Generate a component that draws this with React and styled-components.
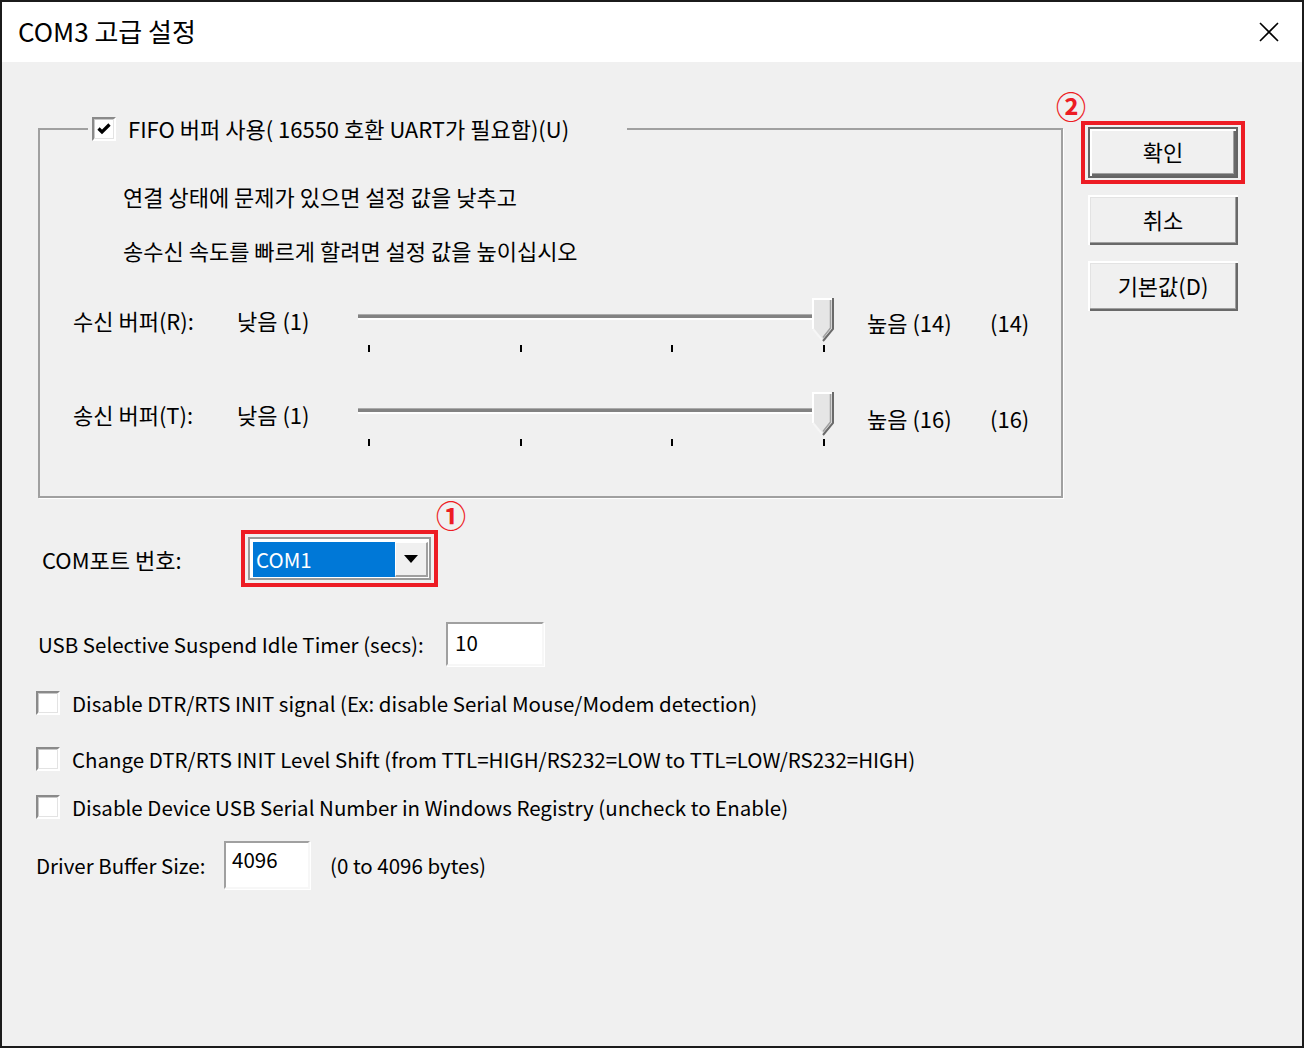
import React from 'react';
import styled, { createGlobalStyle } from 'styled-components';

const FONT = `"Noto Sans CJK KR", "Noto Sans", sans-serif`;
const RED = '#ed1c24';

const Global = createGlobalStyle`
  html, body { margin: 0; padding: 0; background: #f0f0f0; }
  body { font-family: ${FONT}; color: #000; }
  * { box-sizing: border-box; }
`;

const Window = styled.div`
  width: 1304px;
  height: 1048px;
  border: 2px solid #1b1b1b;
  display: flex;
  flex-direction: column;
  background: #f0f0f0;
  overflow: hidden;
`;

const TitleBar = styled.div`
  height: 60px;
  flex-shrink: 0;
  background: #fff;
  display: flex;
  align-items: center;
  justify-content: space-between;
  padding: 0 22px 4px 16px;
  font-size: 26px;
`;

const CloseWrap = styled.span`
  display: flex;
  margin-top: 4px;
`;

const Body = styled.div`
  flex: 1;
  display: flex;
  align-items: flex-start;
  font-size: 20.5px;
`;

const Main = styled.div`
  width: 1061px;
  padding: 54px 0 0 34px;
  display: flex;
  flex-direction: column;
`;

const Side = styled.div`
  padding: 59px 0 0 18px;
  display: flex;
  flex-direction: column;
  align-items: flex-start;
  font-size: 22px;
`;

const Group = styled.fieldset`
  margin: 0 0 0 2px;
  padding: 0 0 46px 0;
  min-width: 0;
  border: 2px solid #a0a0a0;
  box-shadow: 1px 1px 0 #fff;
  font-size: 22px;
`;

const Legend = styled.legend`
  margin-left: 48px;
  padding: 0 58px 0 4px;
  height: 26px;
  line-height: 26px;
  display: flex;
  align-items: center;
  gap: 12px;
`;

const LegendText = styled.span`
  margin-top: -2px;
`;

const GroupBody = styled.div`
  padding-top: 41px;
`;

const Desc = styled.div`
  padding-left: 83px;
  line-height: 26px;
  margin-top: ${p => p.$mt || 0}px;
`;

const SliderRow = styled.div`
  display: grid;
  grid-template-columns: 164px 121px 509px 123px auto;
  padding-left: 33px;
  height: 60px;
  margin-top: ${p => p.$mt}px;
`;

const Cell = styled.div`
  line-height: 26px;
  margin-top: ${p => p.$mt}px;
  white-space: nowrap;
`;

const SliderBox = styled.div`
  display: flex;
  flex-direction: column;
`;

const TrackLine = styled.div`
  display: flex;
  align-items: flex-start;
  padding-top: 2px;
`;

const Track = styled.div`
  width: 454px;
  height: 6px;
  margin-top: 16px;
  border-top: 1px solid #ababab;
  border-bottom: 2px solid #fff;
  background: #828282;
`;

const Ticks = styled.div`
  width: 457px;
  margin: 3px 0 0 10px;
  display: flex;
  justify-content: space-between;
`;

const Tick = styled.span`
  width: 2px;
  height: 7px;
  background: #000;
`;

const Row = styled.div`
  display: flex;
  align-items: center;
  margin-top: ${p => p.$mt}px;
  margin-left: ${p => p.$ml || 0}px;
`;

const Label = styled.div`
  width: ${p => p.$w}px;
  margin-left: ${p => p.$ml || 0}px;
  font-size: ${p => p.$fs || 'inherit'};
  line-height: 26px;
  white-space: nowrap;
  flex-shrink: 0;
`;

const AnnotFrame = styled.div`
  position: relative;
  border: 4px solid ${RED};
  padding: ${p => p.$pad};
`;

const Marker = styled.span`
  position: absolute;
  left: ${p => p.$l}px;
  top: ${p => p.$t}px;
  color: ${RED};
  font-size: 30px;
  font-weight: 700;
  line-height: 30px;
`;

const Combo = styled.div`
  width: 183px;
  height: 43px;
  border: 2px solid #9a9a9a;
  background: #fff;
  padding: 3px 1px 1px 3px;
  display: flex;
`;

const ComboValue = styled.div`
  flex: 1;
  background: #0078d7;
  color: #fff;
  line-height: 34px;
  padding-left: 3px;
`;

const ComboButton = styled.div`
  width: 33px;
  background: #f0f0f0;
  border-style: solid;
  border-width: 1px 2px 2px 1px;
  border-color: #fff #a0a0a0 #a0a0a0 #fff;
  display: flex;
  align-items: center;
  justify-content: center;
`;

const TextBox = styled.div`
  width: ${p => p.$w}px;
  height: ${p => p.$h}px;
  background: #fff;
  border-style: solid;
  border-width: 2px;
  border-color: #a0a0a0 #f7f7f7 #f7f7f7 #a0a0a0;
  box-shadow: 1px 1px 0 #fff;
  padding: ${p => p.$pt}px 0 0 ${p => p.$pl}px;
  line-height: 26px;
`;

const BoxWrap = styled.span`
  width: 24px;
  height: 24px;
  flex-shrink: 0;
  background: #fff;
  border-style: solid;
  border-width: 2px;
  border-color: #8a8a8a #fff #fff #8a8a8a;
  box-shadow: inset -1px -1px 0 #e3e3e3, inset 1px 1px 0 #c8c8c8;
  display: flex;
  align-items: center;
  justify-content: center;
`;

const CheckRow = styled.div`
  display: flex;
  align-items: center;
  gap: 12px;
  height: 24px;
  margin-top: ${p => p.$mt}px;
  white-space: nowrap;
`;

const Button = styled.div`
  width: 150px;
  height: ${p => p.$h}px;
  margin: ${p => p.$m};
  padding-bottom: 3px;
  background: #f0f0f0;
  display: flex;
  align-items: center;
  justify-content: center;
  box-shadow: ${p => (p.$default
    ? 'inset 0 0 0 2px #646464, inset 4px 4px 0 #fff, inset -4px -4px 0 #696969, inset -5px -5px 0 #a0a0a0'
    : 'inset 2px 2px 0 #fff, inset -2px -2px 0 #696969, inset -3px -3px 0 #a0a0a0, inset 3px 3px 0 #e3e3e3')};
`;

function CheckBox({ checked }) {
  return (
    <BoxWrap>
      {checked && (
        <svg width="14" height="12" viewBox="0 0 14 12">
          <path d="M1.5 5.5 L5 9 L12.5 1.5" fill="none" stroke="#000" strokeWidth="3.2" />
        </svg>
      )}
    </BoxWrap>
  );
}

function Thumb() {
  return (
    <svg width="22" height="44" viewBox="0 0 22 44" style={{ display: 'block' }}>
      <polygon points="0,0 22,0 22,31 11,44 0,31" fill="#e6e6e6" />
      <polyline points="1,31 1,1 21,1" fill="none" stroke="#fff" strokeWidth="2" />
      <polyline points="1,31 11,43" fill="none" stroke="#f6f6f6" strokeWidth="2" />
      <polyline points="21,0 21,31 11,43" fill="none" stroke="#6a6a6a" strokeWidth="2" />
      <polyline points="18.5,2 18.5,30 11,39.5" fill="none" stroke="#a0a0a0" strokeWidth="1.5" />
    </svg>
  );
}

function Slider() {
  return (
    <SliderBox>
      <TrackLine>
        <Track />
        <Thumb />
      </TrackLine>
      <Ticks>
        <Tick /><Tick /><Tick /><Tick />
      </Ticks>
    </SliderBox>
  );
}

function CloseIcon() {
  return (
    <CloseWrap>
      <svg width="22" height="22" viewBox="0 0 22 22">
        <path d="M2 2 L20 20 M20 2 L2 20" stroke="#000" strokeWidth="1.6" />
      </svg>
    </CloseWrap>
  );
}

export default function App() {
  return (
    <>
      <Global />
      <Window>
        <TitleBar>
          <span>COM3 고급 설정</span>
          <CloseIcon />
        </TitleBar>
        <Body>
          <Main>
            <Group>
              <Legend>
                <CheckBox checked />
                <LegendText>FIFO 버퍼 사용( 16550 호환 UART가 필요함)(U)</LegendText>
              </Legend>
              <GroupBody>
                <Desc>연결 상태에 문제가 있으면 설정 값을 낮추고</Desc>
                <Desc $mt={28}>송수신 속도를 빠르게 할려면 설정 값을 높이십시오</Desc>
                <SliderRow $mt={33}>
                  <Cell $mt={11}>수신 버퍼(R):</Cell>
                  <Cell $mt={11}>낮음 (1)</Cell>
                  <Slider />
                  <Cell $mt={13}>높음 (14)</Cell>
                  <Cell $mt={13}>(14)</Cell>
                </SliderRow>
                <SliderRow $mt={34}>
                  <Cell $mt={11}>송신 버퍼(T):</Cell>
                  <Cell $mt={11}>낮음 (1)</Cell>
                  <Slider />
                  <Cell $mt={15}>높음 (16)</Cell>
                  <Cell $mt={15}>(16)</Cell>
                </SliderRow>
              </GroupBody>
            </Group>

            <Row $mt={32} $ml={6}>
              <Label $w={199} $fs="22px">COM포트 번호:</Label>
              <AnnotFrame $pad="3px">
                <Marker $l={191} $t={-35}>①</Marker>
                <Combo>
                  <ComboValue>COM1</ComboValue>
                  <ComboButton>
                    <svg width="14" height="8" viewBox="0 0 14 8">
                      <polygon points="0,0 14,0 7,8" fill="#000" />
                    </svg>
                  </ComboButton>
                </Combo>
              </AnnotFrame>
            </Row>

            <Row $mt={35} $ml={2}>
              <Label $w={408}>USB Selective Suspend Idle Timer (secs):</Label>
              <TextBox $w={98} $h={44} $pt={5} $pl={7}>10</TextBox>
            </Row>

            <CheckRow $mt={25}>
              <CheckBox />
              <span>Disable DTR/RTS INIT signal (Ex: disable Serial Mouse/Modem detection)</span>
            </CheckRow>
            <CheckRow $mt={32}>
              <CheckBox />
              <span>Change DTR/RTS INIT Level Shift (from TTL=HIGH/RS232=LOW to TTL=LOW/RS232=HIGH)</span>
            </CheckRow>
            <CheckRow $mt={24}>
              <CheckBox />
              <span>Disable Device USB Serial Number in Windows Registry (uncheck to Enable)</span>
            </CheckRow>

            <Row $mt={22}>
              <Label $w={188}>Driver Buffer Size:</Label>
              <TextBox $w={86} $h={48} $pt={3} $pl={6}>4096</TextBox>
              <Label $w={200} $ml={20}>(0 to 4096 bytes)</Label>
            </Row>
          </Main>

          <Side>
            <AnnotFrame $pad="2px 3px">
              <Marker $l={-29} $t={-35}>②</Marker>
              <Button $default $h={51} $m="0">확인</Button>
            </AnnotFrame>
            <Button $h={50} $m="11px 0 0 7px">취소</Button>
            <Button $h={50} $m="16px 0 0 7px">기본값(D)</Button>
          </Side>
        </Body>
      </Window>
    </>
  );
}
